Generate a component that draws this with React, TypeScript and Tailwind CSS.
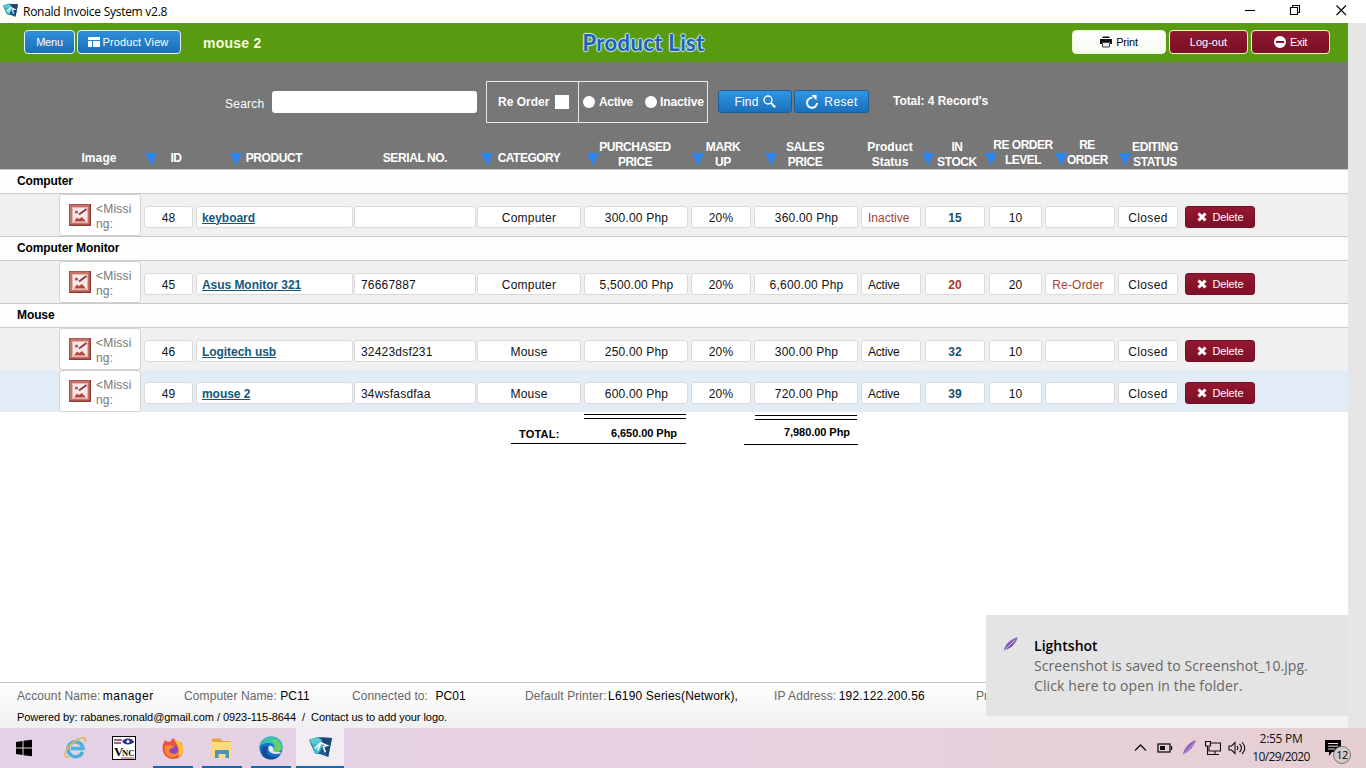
import type { ReactNode } from "react"

type Product = {
  id: number
  name: string
  serial: string
  category: string
  purchased: string
  sales: string
  active: boolean
  stock: number
  level: number
  reorder: boolean
}

const groups: { title: string; items: Product[] }[] = [
  {
    title: "Computer",
    items: [
      { id: 48, name: "keyboard", serial: "", category: "Computer", purchased: "300.00 Php", sales: "360.00 Php", active: false, stock: 15, level: 10, reorder: false },
    ],
  },
  {
    title: "Computer Monitor",
    items: [
      { id: 45, name: "Asus Monitor 321", serial: "76667887", category: "Computer", purchased: "5,500.00 Php", sales: "6,600.00 Php", active: true, stock: 20, level: 20, reorder: true },
    ],
  },
  {
    title: "Mouse",
    items: [
      { id: 46, name: "Logitech usb", serial: "32423dsf231", category: "Mouse", purchased: "250.00 Php", sales: "300.00 Php", active: true, stock: 32, level: 10, reorder: false },
      { id: 49, name: "mouse 2", serial: "34wsfasdfaa", category: "Mouse", purchased: "600.00 Php", sales: "720.00 Php", active: true, stock: 39, level: 10, reorder: false },
    ],
  },
]

const SELECTED_ID = 49

/* ---------- Icons ---------- */

function AppLogo({ className }: { className: string }) {
  return (
    <svg viewBox="0 0 24 24" className={className}>
      <path d="M0 4 L9 1 L24 2 L20 22 L12 19 L6 18 Z" fill="#1d5f8a" />
      <path d="M0 4 L9 1 L13 4 L8 9 L3 8 Z" fill="#5cc8d6" />
      <path d="M13 1.500 L24 2 L20 22 L15 12 Z" fill="#1f4678" />
      <path d="M3 8 L8 9 L13 4 L15 9 L10 18 L6 18 Z" fill="#45bfca" />
      <path d="M6 13 L12 7 L19 10 L15 11 L17 17 M12 8 L9 15" stroke="#effaff" strokeWidth="1.700" fill="none" />
    </svg>
  )
}

function Feather({ className }: { className: string }) {
  return (
    <svg viewBox="0 0 18 18" className={className}>
      <path d="M2 15 C3 9 8 4 16.500 1 C16 6 11 12 3.500 15 Z" fill="#8a5fc0" />
      <path d="M1 17 L14 4" stroke="#d9c6f0" strokeWidth="1" />
      <path d="M6 13 L12 9" stroke="#5e3a96" strokeWidth="1" />
    </svg>
  )
}

function SortArrow() {
  return (
    <svg viewBox="0 0 14 14" className="mb-[3px] h-[14px] w-[14px] shrink-0">
      <path d="M1 1 H13 L7 13.500 Z" fill="#2a86f5" />
    </svg>
  )
}

function MissingIcon() {
  return (
    <svg viewBox="0 0 22 22" className="h-[22px] w-[22px] shrink-0">
      <rect width="22" height="22" fill="#8f3a34" />
      <rect x="0.500" y="0.500" width="20" height="20" fill="#c4746b" />
      <rect x="3" y="3" width="16" height="16" fill="#fbe9e6" />
      <rect x="3.500" y="3.500" width="15" height="15" fill="none" stroke="#e3b3ac" />
      <circle cx="7.500" cy="8" r="1.600" fill="#8c5a80" />
      <path d="M10 10.500 L17.500 5" stroke="#8b3444" strokeWidth="1.800" />
      <path d="M5 17.500 L8 13.500 L10 15 L13 13 L17 17.500 Z" fill="#b5483f" />
    </svg>
  )
}

/* ---------- Top bars ---------- */

function TitleBar() {
  return (
    <div className="flex h-[23px] items-center bg-white pl-[3px] font-['Open_Sans','Noto_Sans',sans-serif]">
      <AppLogo className="mb-0.5 h-[15px] w-[15px]" />
      <span className="ml-[5px] text-[12px] tracking-[-0.27px] text-black">Ronald Invoice System v2.8</span>
      <svg viewBox="0 0 104 14" className="mr-[18px] mb-[3px] ml-auto h-[14px] w-[104px]" fill="none" stroke="#000" strokeWidth="1.100">
        <path d="M1 7.500 H11" />
        <path d="M46.500 4.500 H53.500 V11.500 H46.500 Z M48.500 4 V2.500 H55.500 V9.500 H54" />
        <path d="M92.500 2.500 L102 12 M102 2.500 L92.500 12" />
      </svg>
    </div>
  )
}

function Toolbar() {
  return (
    <div className="flex h-[39px] items-start bg-[#589b10] pt-[7px] pl-6 text-[11px] text-white">
      <button className="flex h-6 w-[51px] items-center justify-center rounded-[4px] border border-[#e2f3ff] bg-linear-to-b from-[#2f8fdc] to-[#1a6fb6] tracking-[-0.2px]">
        Menu
      </button>
      <button className="ml-[2px] flex h-6 w-[104px] items-center justify-center gap-[3px] rounded-[4px] border border-[#e2f3ff] bg-linear-to-b from-[#2f8fdc] to-[#1a6fb6] pr-[2px] tracking-[0.1px]">
        <svg viewBox="0 0 12 10" className="h-[10px] w-3">
          <path d="M0 0 H12 V3 H0 Z M0 4 H4 V10 H0 Z M5 4 H12 V10 H5 Z" fill="#fff" />
        </svg>
        Product View
      </button>
      <span className="mt-[5px] ml-[22px] text-[14px] leading-4 font-bold tracking-[0.25px] text-[#f6fbda]">mouse 2</span>
      <h1 className="mt-[2px] ml-[321px] w-[124px] font-[Lato,sans-serif] text-[22px] leading-[22px] font-bold tracking-[0.35px] whitespace-nowrap text-[#1d60b4] [text-shadow:0_0_1px_#c9eaff,1px_0_1px_#c9eaff,-1px_0_1px_#c9eaff,0_1px_1px_#c9eaff,0_-1px_1px_#c9eaff]">
        Product List
      </h1>
      <div className="mr-[18px] ml-auto flex gap-[3px]">
        <button className="flex h-6 w-[94px] items-center justify-center gap-1 rounded-[4px] border border-[#e9f9d8] bg-linear-to-b from-white to-[#f4faee] text-black">
          <svg viewBox="0 0 12 12" className="h-3 w-3">
            <path d="M2.500 0.500 H9.500 V2 H2.500 Z M0 3 H12 V8 H10 V6 H2 V8 H0 Z" fill="#111" />
            <path d="M2.500 6.500 H9.500 V11 H2.500 Z" fill="#eee" stroke="#444" />
          </svg>
          <span className="tracking-[-0.2px]">Print</span>
        </button>
        <button className="flex h-6 w-[79px] items-center justify-center rounded-[4px] border border-[#f7f3c8] bg-linear-to-b from-[#8f1830] to-[#7a1025]">
          Log-out
        </button>
        <button className="flex h-6 w-[79px] items-center justify-center gap-1 rounded-[4px] border border-[#f7f3c8] bg-linear-to-b from-[#8f1830] to-[#7a1025]">
          <svg viewBox="0 0 12 12" className="h-3 w-3">
            <circle cx="6" cy="6" r="6" fill="#fff" />
            <path d="M2 6 H10" stroke="#861630" strokeWidth="2" />
          </svg>
          <span className="tracking-[-0.3px]">Exit</span>
        </button>
      </div>
    </div>
  )
}

function SearchBar() {
  return (
    <div className="flex h-[70px] items-start pt-[19px] pl-[225px] text-[12px] text-white">
      <label className="mt-[15px] w-[47px] leading-4 tracking-[0.25px]">Search</label>
      <input className="mt-[10px] h-[22px] w-[205px] rounded-[3px] bg-white text-black" />
      <div className="ml-[9px] flex h-[42px] w-[222px] border border-[#e8e8e8] font-bold">
        <label className="flex w-[92px] items-center gap-[6px] border-r border-[#e8e8e8] pl-[11px] whitespace-nowrap">
          Re Order
          <span className="h-[14px] w-[14px] bg-white" />
        </label>
        <label className="ml-1 flex w-[62px] items-center gap-1 tracking-[-0.35px]">
          <span className="h-3 w-3 rounded-full bg-white" />
          Active
        </label>
        <label className="flex items-center gap-[3px] tracking-[-0.1px]">
          <span className="h-3 w-3 rounded-full bg-white" />
          Inactive
        </label>
      </div>
      <button className="mt-[9px] ml-[10px] flex h-[23px] w-[74px] items-center justify-center gap-1 rounded-[3px] border border-[#1a5f9c] bg-linear-to-b from-[#2f96e4] to-[#1a70ba] tracking-[0.2px]">
        Find
        <svg viewBox="0 0 13 13" className="h-[13px] w-[13px]" fill="none" stroke="#fff">
          <circle cx="5" cy="5" r="4" strokeWidth="1.400" />
          <path d="M8 8 L12.200 12.200" strokeWidth="2" />
        </svg>
      </button>
      <button className="mt-[9px] ml-[2px] flex h-[23px] w-[75px] items-center justify-center gap-[5px] rounded-[3px] border border-[#1a5f9c] bg-linear-to-b from-[#2f96e4] to-[#1a70ba] tracking-[0.4px]">
        <svg viewBox="0 0 14 14" className="h-[14px] w-[14px]">
          <path d="M7.500 2.800 A5 5 0 1 0 12 8" fill="none" stroke="#fff" strokeWidth="2" />
          <path d="M6.500 0 H11.500 V5.500 Z" fill="#fff" />
        </svg>
        Reset
      </button>
      <span className="mt-3 ml-6 leading-4 font-bold tracking-[-0.05px]">Total: 4 Record's</span>
    </div>
  )
}

/* ---------- Table ---------- */

function Head({ label, arrow = true, className }: { label: string; arrow?: boolean; className: string }) {
  return (
    <div className="flex items-end">
      {arrow && <SortArrow />}
      <span className={`relative text-center leading-[15px] whitespace-pre ${className}`}>{label}</span>
    </div>
  )
}

function TableHead() {
  return (
    <div className="grid h-[37px] grid-cols-[59px_85px_85px_125px_126px_106px_105px_73px_97px_60px_63px_70px_64px_1fr] text-[12px] font-bold tracking-[-0.4px] text-white">
      <span />
      <Head label="Image" arrow={false} className="mb-[3px] w-20 tracking-[0.1px]" />
      <Head label="ID" className="mb-[3px] w-9" />
      <Head label="PRODUCT" className="mb-[3px] w-[62px]" />
      <Head label="SERIAL NO." arrow={false} className="mb-[3px] w-[122px]" />
      <Head label="CATEGORY" className="mb-[3px] w-[70px] tracking-[-0.5px]" />
      <Head label={"PURCHASED\nPRICE"} className="-mb-px -ml-px w-[72px] tracking-[-0.5px]" />
      <Head label={"MARK\nUP"} className="-mb-px w-9" />
      <Head label={"SALES\nPRICE"} className="-mb-px w-[54px]" />
      <Head label={"Product\nStatus"} arrow={false} className="-mb-px w-[58px] tracking-[0px]" />
      <Head label={"IN\nSTOCK"} className="-mb-px w-11" />
      <Head label={"RE ORDER\nLEVEL"} className="mb-px -ml-[5px] w-[60px] tracking-[-0.5px]" />
      <Head label={"RE\nORDER"} className="mb-px -ml-px w-10 tracking-[-0.5px]" />
      <Head label={"EDITING\nSTATUS"} className="-mb-px w-[46px]" />
    </div>
  )
}

function Field({ children, className = "justify-center mr-[3px]" }: { children?: ReactNode; className?: string }) {
  return (
    <div className={`flex h-[22px] items-center rounded-[3px] border border-[#dadada] bg-white pt-px whitespace-nowrap ${className}`}>
      {children}
    </div>
  )
}

function ProductRow({ item }: { item: Product }) {
  const rowColor = item.id === SELECTED_ID ? "bg-[#e1ecf7]" : "bg-[#f0f0f0]"
  return (
    <div
      className={`grid h-[42px] grid-cols-[59px_85px_52px_158px_123px_107px_107px_63px_107px_64px_64px_56px_73px_67px_70px] items-start pt-3 text-[12px] tracking-[0.2px] text-[#111] ${rowColor}`}
    >
      <span />
      <div className="-mt-3 mr-[3px] flex h-[42px] gap-[5px] rounded-[3px] border border-[#d2d2d2] bg-white pt-[9px] pl-[9px]">
        <MissingIcon />
        <span className="-mt-[2px] text-[12px] leading-[15px] tracking-[0.2px] text-[#777]">
          &lt;Missi
          <br />
          ng:
        </span>
      </div>
      <Field>{item.id}</Field>
      <Field className="mr-px pl-[5px]">
        <a className="font-bold tracking-[-0.05px] text-[#15577b] underline">{item.name}</a>
      </Field>
      <Field className="mr-px pl-[6px]">{item.serial}</Field>
      <Field>{item.category}</Field>
      <Field className="mr-[3px] justify-center pl-px">{item.purchased}</Field>
      <Field>20%</Field>
      <Field className="mr-[3px] justify-center pl-px">{item.sales}</Field>
      <Field className="mr-1 pl-[6px]">
        <span className={item.active ? "tracking-[-0.2px]" : "tracking-[0px] text-[#a64030]"}>{item.active ? "Active" : "Inactive"}</span>
      </Field>
      <Field className="mr-1 justify-center">
        <b className={item.reorder ? "text-[#a8382c]" : "text-[#15506f]"}>{item.stock}</b>
      </Field>
      <Field>{item.level}</Field>
      <Field className="mr-[3px] justify-center pr-1">
        {item.reorder && <span className="text-[#a64030]">Re-Order</span>}
      </Field>
      <Field className="mr-[7px] justify-center tracking-[0.35px]">Closed</Field>
      <button className="flex h-[22px] items-center justify-center gap-[5px] rounded-[3px] border border-[#74102a] bg-linear-to-b from-[#93182f] to-[#7e1027] pl-px text-[11px] tracking-[-0.1px] text-white">
        <svg viewBox="0 0 10 10" className="h-[10px] w-[10px]">
          <path d="M1.500 1.500 L8.500 8.500 M8.500 1.500 L1.500 8.500" stroke="#fff" strokeWidth="3" />
        </svg>
        Delete
      </button>
    </div>
  )
}

function Totals() {
  return (
    <div className="flex pt-[2px] pl-[511px] text-[11px] font-bold text-black">
      <div className="flex h-[30px] w-[175px] flex-col border-b border-black">
        <div className="ml-[73px] h-[5px] shrink-0 border-y border-black" />
        <div className="flex items-center justify-between pr-[9px] pl-2 leading-6">
          <span className="pt-[3px] tracking-[0.2px]">TOTAL:</span>
          <span className="tracking-[-0.05px]">6,650.00 Php</span>
        </div>
      </div>
      <div className="ml-[58px] flex h-[31px] w-[114px] flex-col border-b border-black pt-px">
        <div className="mr-px ml-[11px] h-[5px] shrink-0 border-y border-black" />
        <span className="self-end pr-[8px] leading-[25px] tracking-[-0.05px]">7,980.00 Php</span>
      </div>
    </div>
  )
}

/* ---------- Footer, toast and taskbar ---------- */

function Footer() {
  return (
    <div className="h-[46px] overflow-hidden border-t border-[#c6c6c6] bg-linear-to-b from-white to-[#f0f0f0] pt-[5px] pl-[17px]">
      <div className="flex text-[12px] leading-4 tracking-[0.1px] whitespace-nowrap text-[#666]">
        <p className="w-[167px]">Account Name: <span className="-ml-[1px] tracking-[0.5px] text-black">manager</span></p>
        <p className="w-[168px]">Computer Name: <span className="text-black">PC11</span></p>
        <p className="w-[173px]">Connected to: <span className="ml-1 text-black">PC01</span></p>
        <p className="w-[249px]">Default Printer: <span className="-ml-[2px] tracking-[0.18px] text-black">L6190 Series(Network),</span></p>
        <p className="w-[202px]">IP Address: <span className="-ml-[1px] tracking-[0.2px] text-black">192.122.200.56</span></p>
        <p>Pr</p>
      </div>
      <p className="mt-[6px] text-[11px] leading-[14px] tracking-[-0.055px] whitespace-pre text-black">
        {"Powered by: rabanes.ronald@gmail.com / 0923-115-8644  /  Contact us to add your logo."}
      </p>
    </div>
  )
}

function Toast() {
  return (
    <div className="absolute right-[18px] bottom-[52px] flex h-[101px] w-[362px] bg-[#e4e4e4] pt-[21px] pl-4 font-['Open_Sans','Noto_Sans',sans-serif] text-[14px] leading-5">
      <Feather className="h-[17px] w-[17px]" />
      <div className="ml-[15px] whitespace-nowrap text-[#666]">
        <p className="font-semibold tracking-[0.02px] text-black">Lightshot</p>
        <p className="tracking-[0.06px]">Screenshot is saved to Screenshot_10.jpg.</p>
        <p className="tracking-[0.12px]">Click here to open in the folder.</p>
      </div>
    </div>
  )
}

function Task({ children, open, active }: { children: ReactNode; open?: boolean; active?: boolean }) {
  return (
    <div className={`flex h-10 w-12 flex-col items-center justify-between pt-2 ${active ? "bg-[#f2ecf3]" : ""}`}>
      {children}
      <span className={`h-[2px] ${active ? "w-12 bg-[#1768ad]" : open ? "w-10 bg-[#1768ad]" : "w-10"}`} />
    </div>
  )
}

function Taskbar() {
  return (
    <div className="flex h-10 items-center bg-linear-to-r from-[#e3d1e5] via-[#e7d2e2] to-[#e6cfd2] font-['Open_Sans','Noto_Sans',sans-serif]">
      <div className="flex gap-px">
        <Task>
          <svg viewBox="0 0 24 24" className="h-6 w-6">
            <path d="M4 6 L10.500 5 V11.500 H4 Z M11.500 4.800 L20 3.800 V11.500 H11.500 Z M4 12.500 H10.500 V19 L4 18 Z M11.500 12.500 H20 V20.200 L11.500 19.200 Z" fill="#000" />
          </svg>
        </Task>
        <div className="ml-[2px] flex gap-px">
          <Task>
            <svg viewBox="0 0 24 24" className="h-6 w-6" fill="none">
              <path d="M19.500 16 A7.500 7.500 0 1 1 20 12.500 H8" stroke="#49b3e0" strokeWidth="3.500" />
              <path d="M6 21 C-3 23 4 10 14 4 C21 0 24 2 21.500 6" stroke="#dfb750" strokeWidth="1.600" />
            </svg>
          </Task>
          <Task>
            <svg viewBox="0 0 24 24" className="h-6 w-6">
              <rect x="0.500" y="0.500" width="23" height="23" fill="#fff" stroke="#000" />
              <path d="M2 4 H10 M2 7 H9 M19 6 H22" stroke="#7d3560" strokeWidth="1.500" />
              <ellipse cx="16" cy="5.500" rx="5.500" ry="3" fill="#26348f" />
              <circle cx="16" cy="5.500" r="1.500" fill="#fff" />
              <text x="2" y="20" fontSize="13" fontWeight="700" fontFamily="Liberation Serif" fill="#000">V</text>
              <text x="10" y="20" fontSize="8.500" fontWeight="700" fontFamily="Liberation Serif" fill="#000">NC</text>
              <path d="M9 22 H22" stroke="#b73640" />
            </svg>
          </Task>
          <Task open>
            <svg viewBox="0 0 24 24" className="h-6 w-6">
              <path d="M4 4 C5 6 7 5 9 6 L12 2 C13 4 17 4 18 6 L20 6 C24 12 23 23 12 23 C2 23 -1 12 4 4 Z" fill="#f2503e" />
              <path d="M12 2 C14 5 18 4 20 7 C24 12 22 19 17 21 C20 14 16 8 12 2 Z" fill="#ffc83a" />
              <circle cx="11.500" cy="14" r="5.200" fill="#8b45bd" />
              <path d="M4 10 C8 8 10 10 14 10 C12 13 9 11 8 15 C10 19 15 19 18 15 C18 20 13 22 10 21 C5 20 3 15 4 10 Z" fill="#fb8a2c" />
            </svg>
          </Task>
          <Task open>
            <svg viewBox="0 0 24 24" className="h-6 w-6">
              <path d="M2 2.500 H11 L12 5 H21 V8 H2 Z" fill="#e0a83f" />
              <path d="M2 6 H22 V22 H2 Z" fill="#fbdc7c" />
              <path d="M5 22 V14 H19 V22 H15.500 V18 H8.500 V22 Z" fill="#4a93c0" />
            </svg>
          </Task>
          <Task open>
            <svg viewBox="0 0 24 24" className="h-6 w-6">
              <circle cx="12" cy="12" r="11.500" fill="#1573c4" />
              <path d="M1 10 C3 -3 23 -2 23.500 10 C24 16 17 17 14 15 C17 11 14 7 10 7 C5 7 2 9 1 10 Z" fill="#35bfae" />
              <path d="M15 3 C20 4 25 12 21.500 15 C18 17 15 16 14 15 C18 10 17 6 11 5 Z" fill="#63d368" />
              <path d="M9 11 C5 19 13 24 21 19 C17 24 9 25 4 20 C0 14 5 8 9 11 Z" fill="#114c96" />
              <path d="M10 10 C8 14 11 18 17 18 C20 18 22 17 22 17 C22 15 17 17 14 15 C16 12 13 9 10 10 Z" fill="#e9e4f2" />
            </svg>
          </Task>
          <Task open active>
            <AppLogo className="h-[23px] w-[23px]" />
          </Task>
        </div>
      </div>

      {/* System tray */}
      <svg viewBox="0 0 114 20" className="mr-[5px] ml-auto h-5 w-[114px]" fill="none" stroke="#111" strokeWidth="1.300">
        <path d="M3 12.500 L8.500 7 L14 12.500" />
        <rect x="26" y="6" width="12" height="8" />
        <path d="M28 8 H33 V12 H28 Z" fill="#111" stroke="none" />
        <path d="M39.500 8 V12" />
        <path d="M51 16 C52 10 58 4 63.500 2 C63 7 58 13 52 16 Z" fill="#8a5fc0" stroke="none" />
        <path d="M50 18 L62 5" stroke="#c5afe2" strokeWidth="0.900" />
        <path d="M78 5 H88.500 V13 H77 V9 M73.500 3.500 H78.500 V8 H73.500 Z M75.500 8 V16.500 H85 M81 16.500 H87 M83 13 V16" strokeWidth="1.100" />
        <path d="M97 8 H99.500 L103 4.500 V15.500 L99.500 12 H97 Z M105 8 C106 9.500 106 11 105 12 M107.500 6 C110 8.500 110 12 107.500 14 M110 4 C113.500 8 113.500 12.500 110 16" strokeWidth="1.100" />
      </svg>
      <div className="w-[60px] text-center text-[12px] leading-[18px] tracking-[-0.6px] whitespace-nowrap text-[#111]">
        <p className="tracking-[-0.3px]">2:55 PM</p>
        <p>10/29/2020</p>
      </div>
      <div className="relative mr-4 ml-[13px] h-6 w-[26px]">
        <svg viewBox="0 0 18 18" className="mt-[3px] h-[18px] w-[18px]">
          <path d="M1 1 H17 V13 H8 L5 17 V13 H1 Z" fill="#000" />
          <path d="M4 4.500 H14 M4 7.200 H14 M4 10 H11" stroke="#eedde1" />
        </svg>
        <span className="absolute -right-px -bottom-[4px] flex h-[18px] w-[18px] items-center justify-center rounded-full border border-[#777] bg-[#d5c9cc] text-[11px] tracking-[-0.5px] text-black">
          12
        </span>
      </div>
    </div>
  )
}

export default function App() {
  return (
    <div className="relative flex h-[768px] w-[1366px] flex-col overflow-hidden bg-white font-['Liberation_Sans',Arial,sans-serif]">
      <TitleBar />
      <div className="flex min-h-0 flex-1">
        <main className="flex w-[1348px] flex-col">
          <Toolbar />
          <div className="h-[107px] bg-[#777777]">
            <SearchBar />
            <TableHead />
          </div>
          {groups.map((group) => (
            <section key={group.title}>
              <h2 className="h-6 border-t border-[#cacaca] bg-[#fdfdfd] pl-[17px] text-[12px] leading-[22px] font-bold tracking-[-0.1px] text-black">
                {group.title}
              </h2>
              <div className="border-t border-[#cacaca]">
                {group.items.map((item) => (
                  <ProductRow key={item.id} item={item} />
                ))}
              </div>
            </section>
          ))}
          <Totals />
          <div className="mt-auto">
            <Footer />
          </div>
        </main>
        {/* Scrollbar gutter */}
        <div className="w-[18px] bg-[#e6e6e6]" />
      </div>
      <Taskbar />
      <Toast />
    </div>
  )
}
